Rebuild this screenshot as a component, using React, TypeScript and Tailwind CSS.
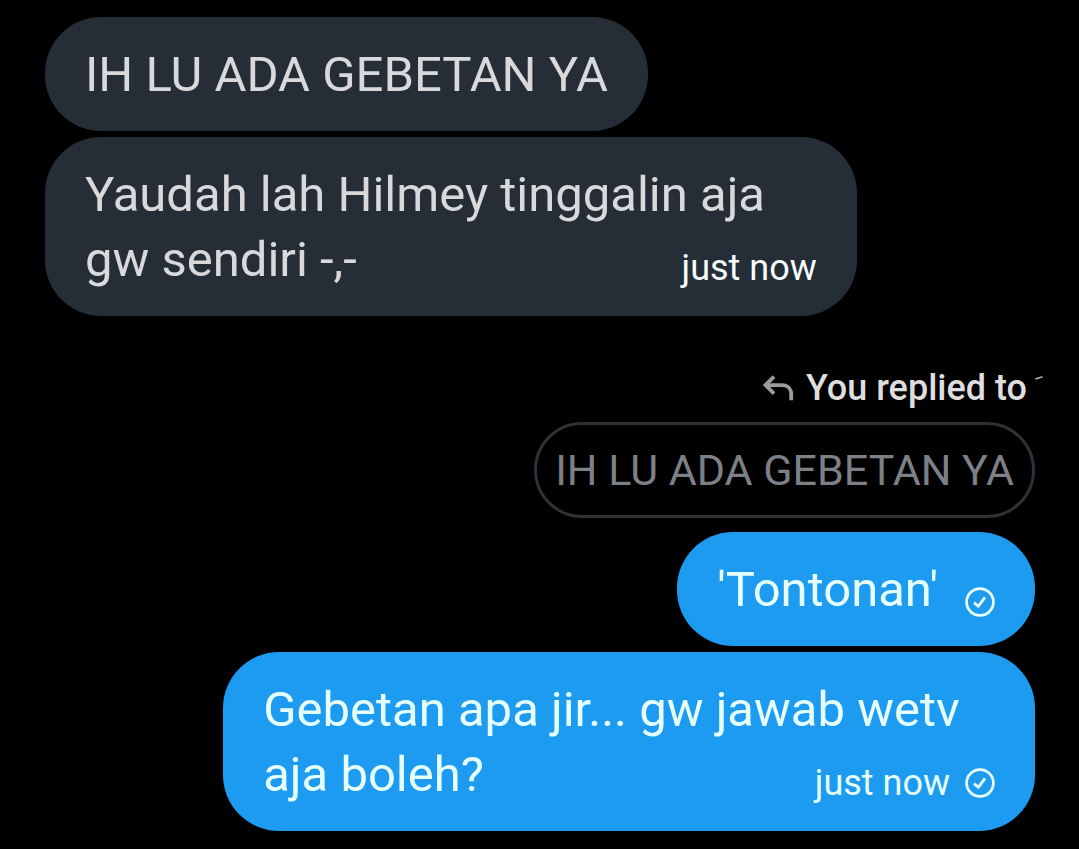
interface BubbleProps {
  lines: string[]
  own?: boolean
  time?: string
}

function SentIcon() {
  return (
    <svg className="size-[30px] shrink-0" viewBox="0 0 30 30" fill="none" stroke="currentColor" aria-label="Sent" role="img">
      <circle cx="15" cy="15" r="13.4" strokeWidth="2.7" />
      <path d="M9 15.600l4.300 3.700 6.700-9" strokeWidth="2.8" />
    </svg>
  )
}

function ReplyIcon() {
  return (
    <svg className="w-8 h-[26px] shrink-0" viewBox="0 0 32 26" fill="none" stroke="#9a9a9a" strokeWidth="3.8" aria-hidden="true">
      <path d="M12 1.600L3.500 10.100l8.500 8.500" />
      <path d="M3.500 10.100H20c5.500 0 9.200 3.500 9.200 9v6.200" />
    </svg>
  )
}

function Bubble({ lines, own, time }: BubbleProps) {
  const last = lines[lines.length - 1]

  return (
    <div
      className={`rounded-[56px] px-10 pt-[25px] pb-6 text-[49px] leading-[65px] ${
        own ? 'self-end bg-[#1d9bf0] text-[#e6ffff]' : 'self-start bg-[#252e36] text-[#d9d9dc]'
      } ${lines.length > 1 ? 'w-[82%]' : ''}`}
    >
      {lines.slice(0, -1).map((line) => (
        <p key={line}>{line}</p>
      ))}
      <div className="flex justify-between gap-[27px]">
        <p>{last}</p>
        {(time || own) && (
          <span className={`flex items-center gap-[15px] text-[36px] leading-10 ${time ? 'pt-4' : 'pt-6'} ${own ? '' : 'text-[#f7fcff]'}`}>
            {time && <time>{time}</time>}
            {own && <SentIcon />}
          </span>
        )}
      </div>
    </div>
  )
}

export default function App() {
  return (
    <main className="flex min-h-screen flex-col gap-1.5 bg-black pt-[17px] pr-11 pb-[18px] pl-[45px] font-['Roboto',sans-serif]">
      <Bubble lines={['IH LU ADA GEBETAN YA']} />
      <Bubble lines={['Yaudah lah Hilmey tinggalin aja', 'gw sendiri -,-']} time="just now" />

      <div className="mt-10 -mr-2 mb-0.5 flex h-[52px] items-center justify-end text-[36px] font-medium text-[#dedede]">
        <ReplyIcon />
        <span className="ml-3">You replied to</span>
        <svg className="ml-2 h-6 w-2" viewBox="0 0 8 24" fill="none" stroke="#b5b5b5" strokeWidth="1.6" aria-hidden="true">
          <path d="M.5 3L7.500.8" />
        </svg>
      </div>
      <blockquote className="mb-2 self-end rounded-full border-3 border-[#2f3136] px-[18px] py-3 text-[43px] leading-[66px] text-[#7d8086]">
        IH LU ADA GEBETAN YA
      </blockquote>

      <Bubble own lines={["'Tontonan'"]} />
      <Bubble own lines={['Gebetan apa jir... gw jawab wetv', 'aja boleh?']} time="just now" />
    </main>
  )
}
